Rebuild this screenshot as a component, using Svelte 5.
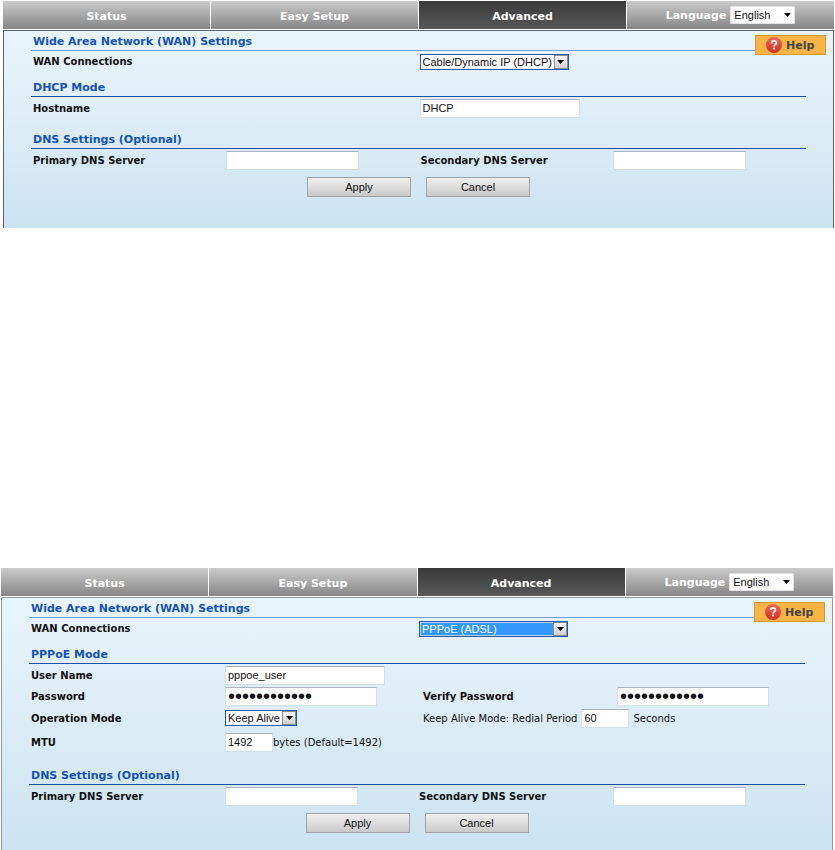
<script>
  const tabs = ['Status', 'Easy Setup', 'Advanced'];
  let dhcpWan = $state('Cable/Dynamic IP (DHCP)');
  let pppoeWan = $state('PPPoE (ADSL)');
  let hostname = $state('DHCP');
  let userName = $state('pppoe_user');
  let password = $state('secret123456');
  let verify = $state('secret123456');
  let redial = $state('60');
  let mtu = $state('1492');
  const modes = ['Cable/Dynamic IP (DHCP)', 'PPPoE (ADSL)'];
</script>

{#snippet caret()}
  <svg class="caret" viewBox="0 0 7 4" width="7" height="4" aria-hidden="true"><path d="M0 0h7L3.5 4z" /></svg>
{/snippet}

{#snippet nav(id)}
  <nav class="tabs">
    {#each tabs as tab}
      <a href="#{id}" class="tab" class:active={tab === 'Advanced'}>{tab}</a>
    {/each}
    <div class="tab language">
      <label for="{id}-lang">Language</label>
      <span class="picker plain">
        <select id="{id}-lang"><option>English</option></select>
        {@render caret()}
      </span>
    </div>
  </nav>
{/snippet}

{#snippet help()}
  <button class="help" type="button">
    <svg viewBox="0 0 16 16" width="16" height="16" aria-hidden="true">
      <defs>
        <linearGradient id="ball" x1="0" y1="0" x2="0" y2="1">
          <stop offset="0" stop-color="#ee6a58" />
          <stop offset="1" stop-color="#cf2f22" />
        </linearGradient>
      </defs>
      <circle cx="8" cy="8" r="8" fill="url(#ball)" />
      <path d="M5.7 6.2c0-3 4.8-3 4.8-.2 0 1.7-2.4 1.6-2.4 3.4" fill="none" stroke="#fff" stroke-width="1.7" />
      <rect x="7.2" y="10.6" width="1.8" height="1.8" fill="#fff" />
    </svg>
    Help
  </button>
{/snippet}

{#snippet wan(id, value, focused)}
  <h2 class="first">Wide Area Network (WAN) Settings</h2>
  <div class="row">
    <label for="{id}-wan">WAN Connections</label>
    <div class="cell third">
      <span class="picker wan" class:focused>
        <select id="{id}-wan" {value}>
          {#each modes as mode}<option>{mode}</option>{/each}
        </select>
        <span class="drop">{@render caret()}</span>
      </span>
    </div>
  </div>
{/snippet}

{#snippet dns(id)}
  <h2 class="spaced">DNS Settings (Optional)</h2>
  <div class="row">
    <label for="{id}-dns1">Primary DNS Server</label>
    <div class="cell"><input class="dns" id="{id}-dns1" type="text" /></div>
    <label for="{id}-dns2">Secondary DNS Server</label>
    <div class="cell"><input class="dns" id="{id}-dns2" type="text" /></div>
  </div>
  <div class="actions">
    <button type="button">Apply</button>
    <button type="button">Cancel</button>
  </div>
{/snippet}

<main>
  <section class="screen dhcp" id="dhcp">
    {@render nav('dhcp')}
    <form class="panel">
      {@render help()}
      {@render wan('dhcp', dhcpWan, false)}
      <h2>DHCP Mode</h2>
      <div class="row">
        <label for="hostname">Hostname</label>
        <div class="cell third"><input class="long" id="hostname" type="text" bind:value={hostname} /></div>
      </div>
      {@render dns('dhcp')}
    </form>
  </section>

  <section class="screen pppoe" id="pppoe">
    {@render nav('pppoe')}
    <form class="panel">
      {@render help()}
      {@render wan('pppoe', pppoeWan, true)}
      <h2>PPPoE Mode</h2>
      <div class="row">
        <label for="user">User Name</label>
        <div class="cell"><input class="long" id="user" type="text" bind:value={userName} /></div>
      </div>
      <div class="row compact">
        <label for="pass">Password</label>
        <div class="cell"><input class="secret" id="pass" type="password" bind:value={password} /></div>
        <label class="inset" for="verify">Verify Password</label>
        <div class="cell inset"><input class="secret" id="verify" type="password" bind:value={verify} /></div>
      </div>
      <div class="row tall">
        <label for="operation">Operation Mode</label>
        <div class="cell">
          <span class="picker">
            <select id="operation"><option>Keep Alive</option></select>
            <span class="drop">{@render caret()}</span>
          </span>
        </div>
        <div class="cell wide inset">
          <label class="note" for="redial">Keep Alive Mode: Redial Period</label>
          <input class="short" id="redial" type="text" bind:value={redial} />
          <span class="note">Seconds</span>
        </div>
      </div>
      <div class="row tall">
        <label for="mtu">MTU</label>
        <div class="cell">
          <input class="short" id="mtu" type="text" bind:value={mtu} />
          <span class="note">bytes (Default=1492)</span>
        </div>
      </div>
      {@render dns('pppoe')}
    </form>
  </section>
</main>

<style>
  :global(body) {
    margin: 0;
    background: #fff;
  }
  main {
    display: flex;
    flex-direction: column;
    gap: 340px;
    padding-top: 1px;
    font-family: 'DejaVu Sans', sans-serif;
    font-size: 10px;
    color: #111;
  }
  .dhcp {
    --frame: #5c6069;
    --edge: 2px;
    --field: 1px;
    --tail: 31px;
    margin: 0 1px 0 3px;
  }
  .pppoe {
    --frame: #8f969e;
    --edge: 2px;
    --field: 2px;
    --tail: 17px;
    margin: 0 2px 0 1px;
  }
  .tabs {
    display: grid;
    grid-template-columns: repeat(4, 1fr);
    gap: 1px;
    height: 28px;
    margin-bottom: 1px;
  }
  .tab {
    display: flex;
    align-items: center;
    justify-content: center;
    gap: 4px;
    padding-top: 2px;
    box-sizing: border-box;
    background: linear-gradient(#cbcbcb, #868686);
    color: #fff;
    font-size: 11px;
    font-weight: bold;
    text-decoration: none;
  }
  .tab.active {
    background: linear-gradient(#3a3a3a, #585858);
  }
  .language {
    padding-top: 0;
  }
  .panel {
    position: relative;
    padding: 0 27px var(--tail);
    border: 1px solid var(--frame);
    border-bottom: 0;
    background: linear-gradient(#e8f4fb, #dcecf6 50%, #cbe4f1);
  }
  h2 {
    height: 19px;
    margin: 5px 0 0;
    padding-left: var(--edge);
    border-bottom: 1px solid #1b4f9f;
    color: #1552b8;
    font-size: 11px;
    line-height: 21px;
  }
  h2.first {
    margin-top: 0;
    border-color: #6f9fd6;
  }
  h2.spaced {
    margin-top: 10px;
  }
  .pppoe h2.spaced {
    margin-top: 11px;
  }
  .row {
    display: grid;
    grid-template-columns: repeat(4, 1fr);
    align-items: center;
    height: 22px;
  }
  .row.compact {
    height: 20px;
  }
  .row.tall {
    height: 24px;
  }
  .first + .row {
    height: 21px;
  }
  .row > * {
    padding-left: var(--edge);
    white-space: nowrap;
  }
  .row > .cell {
    padding-left: var(--field);
  }
  .row > .inset {
    padding-left: 6px;
  }
  .row > label {
    font-weight: bold;
  }
  .cell {
    display: flex;
    align-items: center;
  }
  .third {
    grid-column: 3;
  }
  .wide {
    grid-column: span 2;
    gap: 4px;
  }
  input,
  select,
  .actions button {
    box-sizing: border-box;
    font: 11px 'Liberation Sans', Arial, sans-serif;
    color: #111;
  }
  input {
    height: 19px;
    padding: 0 2px;
    border: 1px solid #d3dfe8;
    border-top-color: #a9b4c0;
    border-radius: 1px;
    background: #fff;
    outline: 0;
  }
  .long {
    width: 160px;
  }
  .dns {
    width: 133px;
  }
  .secret {
    width: 152px;
    font-size: 20px;
    line-height: 17px;
  }
  .short {
    width: 48px;
  }
  .picker {
    display: grid;
    align-items: center;
  }
  .picker > * {
    grid-area: 1 / 1;
  }
  select {
    appearance: none;
    height: 16px;
    margin: 0;
    padding: 0 15px 0 2px;
    border: 1px solid #2459a5;
    border-radius: 0;
    background: #fff;
    outline: 0;
  }
  .plain select {
    width: 65px;
    height: 18px;
    padding-left: 3px;
    border-color: #e4e4e4;
    border-radius: 1px;
  }
  .wan {
    min-width: 146px;
  }
  .focused select {
    background: #3399ff;
    color: #fff;
    box-shadow: inset 0 0 0 1px #b9d4f0;
  }
  .caret {
    justify-self: end;
    margin-right: 4px;
    pointer-events: none;
  }
  .drop {
    display: flex;
    align-items: center;
    justify-content: center;
    justify-self: end;
    box-sizing: border-box;
    width: 14px;
    height: 14px;
    margin-right: 1px;
    border: 1px solid #8b8f96;
    background: linear-gradient(#f6f6f6, #cfcfcf);
    pointer-events: none;
  }
  .drop .caret {
    margin: 0;
  }
  .help {
    position: absolute;
    top: 4px;
    right: 7px;
    display: flex;
    align-items: center;
    gap: 4px;
    box-sizing: border-box;
    width: 71px;
    height: 20px;
    padding: 0 10px;
    border: 1px solid #d39a3b;
    background: #f8b445;
    color: #444;
    font: bold 11px 'DejaVu Sans', sans-serif;
  }
  .help svg {
    flex: none;
  }
  .actions {
    display: flex;
    justify-content: center;
    gap: 15px;
    margin-top: 6px;
  }
  .actions button {
    width: 104px;
    height: 20px;
    padding: 0;
    border: 1px solid #a0a4a8;
    background: linear-gradient(#efefef, #dedede 50%, #c9c9c9);
  }
</style>
